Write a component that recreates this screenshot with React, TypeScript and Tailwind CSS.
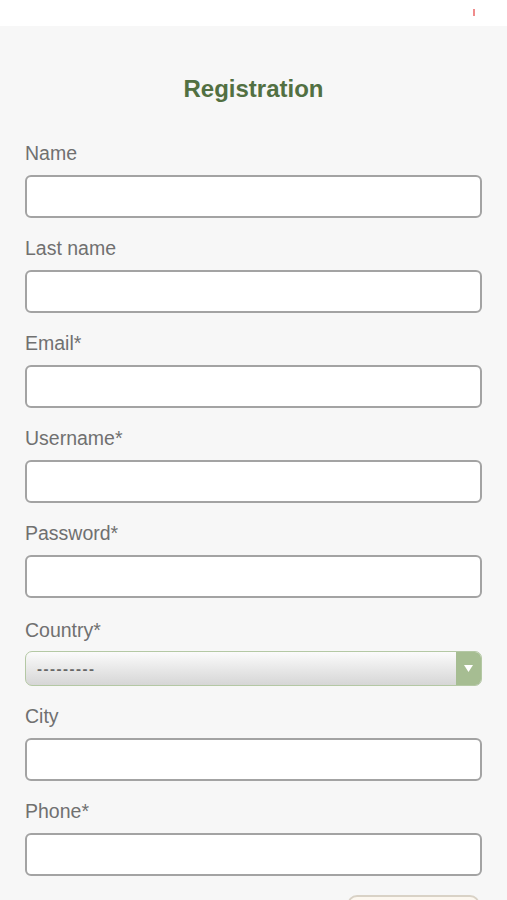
const fields = [
  { label: "Name", type: "text" },
  { label: "Last name", type: "text" },
  { label: "Email*", type: "email" },
  { label: "Username*", type: "text" },
  { label: "Password*", type: "password" },
];

function Field({ label, type }: { label: string; type: string }) {
  return (
    <label className="block">
      <span className="block h-[22px] text-[19.5px] leading-[22px] text-[#707070]">
        {label}
      </span>
      <input
        type={type}
        className="mt-[11px] block h-[43px] w-full rounded-[6px] border-2 border-[#a3a3a3] bg-white px-3 text-[17px] text-[#333] outline-none"
      />
    </label>
  );
}

export default function App() {
  return (
    <div className="min-h-[900px] bg-[#f7f7f7] font-['Liberation_Sans',Arial,sans-serif]">
      <header className="flex h-[26px] items-start justify-end bg-white pr-[32px] pt-[9px]">
        <span className="h-[7px] w-[2px] bg-[#f08c8c]" />
      </header>

      <main className="px-[25px]">
        <h1 className="pt-[49px] text-center text-[24px] font-bold leading-[28px] text-[#527042]">
          Registration
        </h1>

        <form className="mt-[39px] flex flex-col gap-[19px]">
          {fields.map((f) => (
            <Field key={f.label} label={f.label} type={f.type} />
          ))}

          <label className="mt-[2px] block">
            <span className="block h-[22px] text-[19.5px] leading-[22px] text-[#707070]">
              Country*
            </span>
            <div className="mt-[10px] flex h-[35px] w-full overflow-hidden rounded-[7px] border border-[#b4c8a4] bg-gradient-to-b from-[#fbfbfb] to-[#d6d6d6]">
              <span className="flex flex-1 items-center pl-[11px] pt-[2px] text-[15px] font-bold tracking-[1.5px] text-[#666]">
                ---------
              </span>
              <span className="flex w-[25px] items-center justify-center bg-[#a6bd92]">
                <svg width="9" height="7" viewBox="0 0 9 7">
                  <path d="M0 0h9L4.5 7z" fill="#ffffff" />
                </svg>
              </span>
            </div>
          </label>

          <Field label="City" type="text" />
          <Field label="Phone*" type="tel" />

          <div className="flex justify-end pr-[2px]">
            <button
              type="submit"
              className="h-[40px] w-[133px] rounded-[10px] border-2 border-[#d9d2c6] bg-[#fcf7ef] text-[18px] text-[#666]"
            >
              Register
            </button>
          </div>
        </form>
      </main>
    </div>
  );
}
